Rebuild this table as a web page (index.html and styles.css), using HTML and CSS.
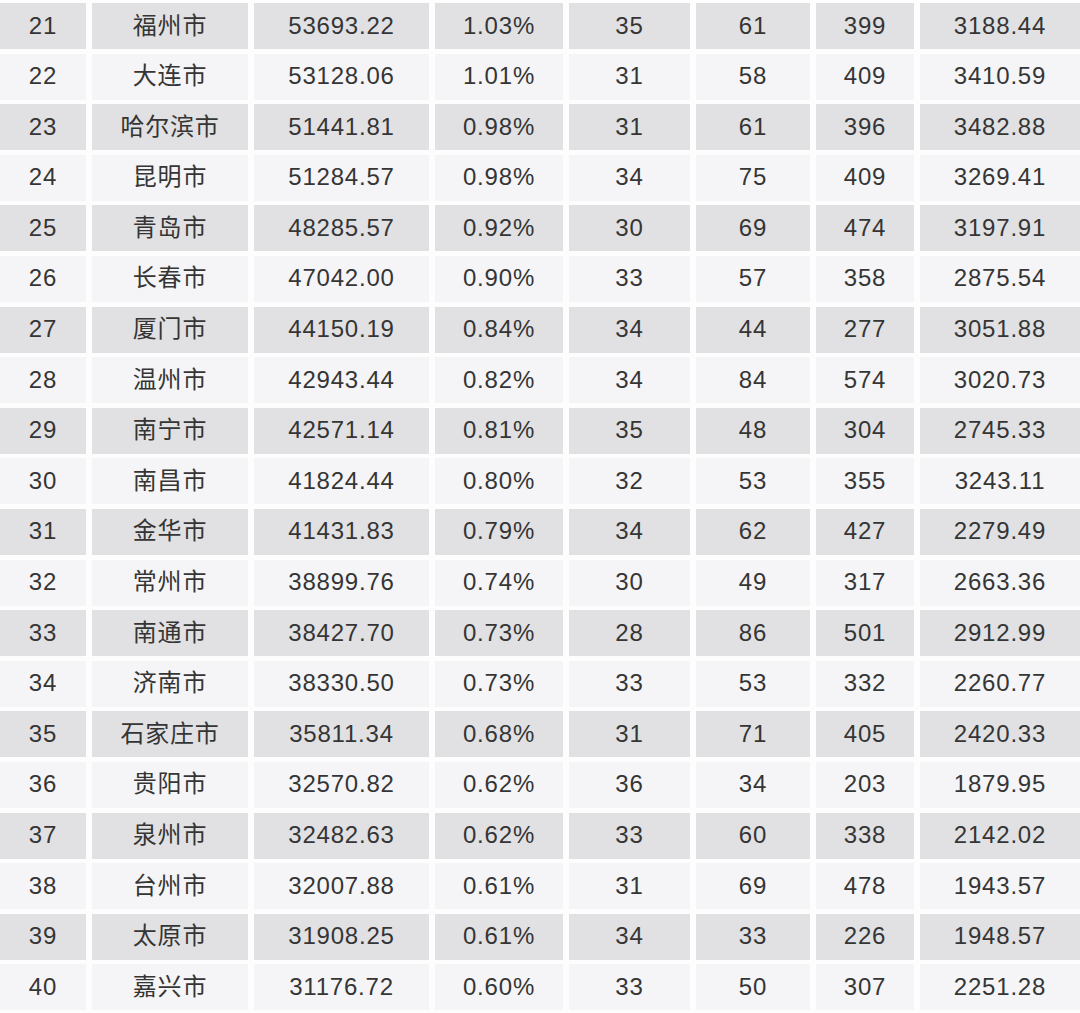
FILE: index.html
```html
<!DOCTYPE html>
<html lang="zh-CN">
<head>
<meta charset="utf-8">
<title>城市数据表</title>
<link rel="stylesheet" href="styles.css">
</head>
<body>
<div class="table">
  <div class="row dark"><div class="c">21</div><div class="c">福州市</div><div class="c">53693.22</div><div class="c">1.03%</div><div class="c">35</div><div class="c">61</div><div class="c">399</div><div class="c">3188.44</div></div>
  <div class="row light"><div class="c">22</div><div class="c">大连市</div><div class="c">53128.06</div><div class="c">1.01%</div><div class="c">31</div><div class="c">58</div><div class="c">409</div><div class="c">3410.59</div></div>
  <div class="row dark"><div class="c">23</div><div class="c">哈尔滨市</div><div class="c">51441.81</div><div class="c">0.98%</div><div class="c">31</div><div class="c">61</div><div class="c">396</div><div class="c">3482.88</div></div>
  <div class="row light"><div class="c">24</div><div class="c">昆明市</div><div class="c">51284.57</div><div class="c">0.98%</div><div class="c">34</div><div class="c">75</div><div class="c">409</div><div class="c">3269.41</div></div>
  <div class="row dark"><div class="c">25</div><div class="c">青岛市</div><div class="c">48285.57</div><div class="c">0.92%</div><div class="c">30</div><div class="c">69</div><div class="c">474</div><div class="c">3197.91</div></div>
  <div class="row light"><div class="c">26</div><div class="c">长春市</div><div class="c">47042.00</div><div class="c">0.90%</div><div class="c">33</div><div class="c">57</div><div class="c">358</div><div class="c">2875.54</div></div>
  <div class="row dark"><div class="c">27</div><div class="c">厦门市</div><div class="c">44150.19</div><div class="c">0.84%</div><div class="c">34</div><div class="c">44</div><div class="c">277</div><div class="c">3051.88</div></div>
  <div class="row light"><div class="c">28</div><div class="c">温州市</div><div class="c">42943.44</div><div class="c">0.82%</div><div class="c">34</div><div class="c">84</div><div class="c">574</div><div class="c">3020.73</div></div>
  <div class="row dark"><div class="c">29</div><div class="c">南宁市</div><div class="c">42571.14</div><div class="c">0.81%</div><div class="c">35</div><div class="c">48</div><div class="c">304</div><div class="c">2745.33</div></div>
  <div class="row light"><div class="c">30</div><div class="c">南昌市</div><div class="c">41824.44</div><div class="c">0.80%</div><div class="c">32</div><div class="c">53</div><div class="c">355</div><div class="c">3243.11</div></div>
  <div class="row dark"><div class="c">31</div><div class="c">金华市</div><div class="c">41431.83</div><div class="c">0.79%</div><div class="c">34</div><div class="c">62</div><div class="c">427</div><div class="c">2279.49</div></div>
  <div class="row light"><div class="c">32</div><div class="c">常州市</div><div class="c">38899.76</div><div class="c">0.74%</div><div class="c">30</div><div class="c">49</div><div class="c">317</div><div class="c">2663.36</div></div>
  <div class="row dark"><div class="c">33</div><div class="c">南通市</div><div class="c">38427.70</div><div class="c">0.73%</div><div class="c">28</div><div class="c">86</div><div class="c">501</div><div class="c">2912.99</div></div>
  <div class="row light"><div class="c">34</div><div class="c">济南市</div><div class="c">38330.50</div><div class="c">0.73%</div><div class="c">33</div><div class="c">53</div><div class="c">332</div><div class="c">2260.77</div></div>
  <div class="row dark"><div class="c">35</div><div class="c">石家庄市</div><div class="c">35811.34</div><div class="c">0.68%</div><div class="c">31</div><div class="c">71</div><div class="c">405</div><div class="c">2420.33</div></div>
  <div class="row light"><div class="c">36</div><div class="c">贵阳市</div><div class="c">32570.82</div><div class="c">0.62%</div><div class="c">36</div><div class="c">34</div><div class="c">203</div><div class="c">1879.95</div></div>
  <div class="row dark"><div class="c">37</div><div class="c">泉州市</div><div class="c">32482.63</div><div class="c">0.62%</div><div class="c">33</div><div class="c">60</div><div class="c">338</div><div class="c">2142.02</div></div>
  <div class="row light"><div class="c">38</div><div class="c">台州市</div><div class="c">32007.88</div><div class="c">0.61%</div><div class="c">31</div><div class="c">69</div><div class="c">478</div><div class="c">1943.57</div></div>
  <div class="row dark"><div class="c">39</div><div class="c">太原市</div><div class="c">31908.25</div><div class="c">0.61%</div><div class="c">34</div><div class="c">33</div><div class="c">226</div><div class="c">1948.57</div></div>
  <div class="row light"><div class="c">40</div><div class="c">嘉兴市</div><div class="c">31176.72</div><div class="c">0.60%</div><div class="c">33</div><div class="c">50</div><div class="c">307</div><div class="c">2251.28</div></div>
</div>
</body>
</html>
```

FILE: styles.css
```css
html, body {
  margin: 0;
  padding: 0;
  background: #fdfdfd;
}

body {
  width: 1080px;
  height: 1013px;
  overflow: hidden;
  font-family: "Liberation Sans", "Noto Sans CJK SC", sans-serif;
  color: #353535;
}

.table {
  display: flex;
  flex-direction: column;
  gap: 4.6px;
  padding-top: 3px;
}

.row {
  display: grid;
  grid-template-columns: 86px 156px 175px 128px 121px 114px 98px 160px;
  column-gap: 6px;
  height: 46px;
}

.c {
  display: flex;
  align-items: center;
  justify-content: center;
  font-size: 24px;
  letter-spacing: 0.8px;
  line-height: 1;
  padding-bottom: 1px;
}

.dark .c {
  background: #e1e1e3;
}

.light .c {
  background: #f5f5f7;
}
```
